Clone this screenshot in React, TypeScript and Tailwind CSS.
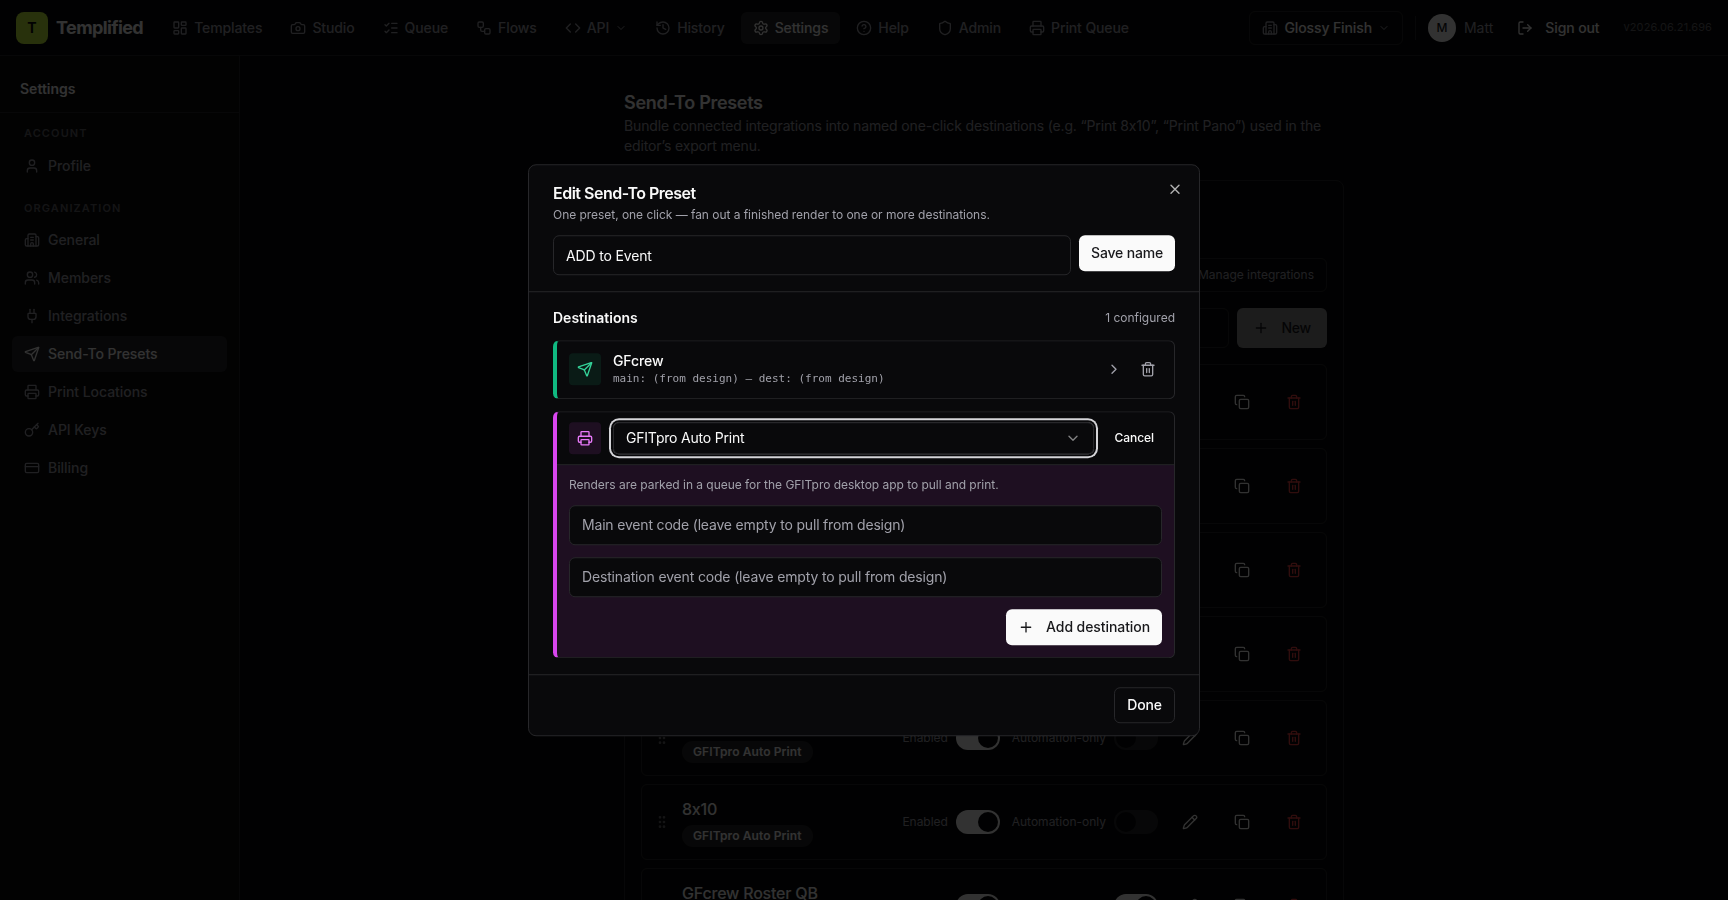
import React from 'react';
import {
    Building2,
    Camera,
    ChevronDown,
    ChevronRight,
    CircleQuestionMark,
    Code,
    Copy,
    CreditCard,
    GripVertical,
    History,
    Key,
    LayoutDashboard,
    ListChecks,
    LogOut,
    Pencil,
    Plug,
    Plus,
    Printer,
    Send,
    Settings,
    Shield,
    Trash2,
    User,
    Users,
    Workflow,
    X,
} from 'lucide-react';
import type { LucideIcon } from 'lucide-react';

interface NavItem {
    label: string;
    icon: LucideIcon;
    active?: boolean;
    hasMenu?: boolean;
}

interface Preset {
    name: string;
    destination: string;
    enabled: boolean;
    automationOnly: boolean;
}

const NAV_ITEMS: NavItem[] = [
    { label: 'Templates', icon: LayoutDashboard },
    { label: 'Studio', icon: Camera },
    { label: 'Queue', icon: ListChecks },
    { label: 'Flows', icon: Workflow },
    { label: 'API', icon: Code, hasMenu: true },
    { label: 'History', icon: History },
    { label: 'Settings', icon: Settings, active: true },
    { label: 'Help', icon: CircleQuestionMark },
    { label: 'Admin', icon: Shield },
    { label: 'Print Queue', icon: Printer },
];

const ACCOUNT_ITEMS: NavItem[] = [{ label: 'Profile', icon: User }];

const ORG_ITEMS: NavItem[] = [
    { label: 'General', icon: Building2 },
    { label: 'Members', icon: Users },
    { label: 'Integrations', icon: Plug },
    { label: 'Send-To Presets', icon: Send, active: true },
    { label: 'Print Locations', icon: Printer },
    { label: 'API Keys', icon: Key },
    { label: 'Billing', icon: CreditCard },
];

const PRESETS: Preset[] = [
    { name: 'ADD to Event', destination: 'GFcrew', enabled: true, automationOnly: false },
    { name: 'Print 8x10', destination: 'GFITpro Auto Print', enabled: true, automationOnly: false },
    { name: 'Print Pano', destination: 'GFITpro Auto Print', enabled: true, automationOnly: false },
    { name: '4x6', destination: 'GFITpro Auto Print', enabled: true, automationOnly: false },
    { name: '5x7', destination: 'GFITpro Auto Print', enabled: true, automationOnly: false },
    { name: '8x10', destination: 'GFITpro Auto Print', enabled: true, automationOnly: false },
    { name: 'GFcrew Roster QB', destination: 'GFcrew', enabled: true, automationOnly: true },
];

const TopNav: React.FC = () => (
    <header className="flex h-14 items-center border-b border-[#27272a] bg-[#09090b] px-4">
        <div className="flex items-center gap-2">
            <div className="flex size-8 items-center justify-center rounded-lg bg-[#c8f53c] text-sm font-bold text-[#09090b]">T</div>
            <span className="text-lg font-bold tracking-[-0.6px]">Templified</span>
        </div>
        <nav className="ml-[17px] flex items-center gap-1">
            {NAV_ITEMS.map(({ label, icon: Icon, active, hasMenu }) => (
                <a
                    key={label}
                    className={`flex h-8 items-center gap-1.5 rounded-md px-3 text-sm font-medium tracking-[-0.11px] ${active ? 'bg-[#27272a] text-[#fafafa]' : 'text-[#a1a1aa]'}`}
                >
                    <Icon className="size-4" />
                    {label}
                    {hasMenu && <ChevronDown className="size-3" />}
                </a>
            ))}
        </nav>
        <div className="ml-auto flex items-center">
            <button className="flex h-[34px] items-center gap-1.5 rounded-md border border-[#27272a] px-3 text-sm font-medium tracking-[-0.12px]">
                <Building2 className="size-4 text-[#a1a1aa]" />
                Glossy Finish
                <ChevronDown className="size-3 text-[#a1a1aa]" />
            </button>
            <div className="ml-3 h-6 w-px bg-[#27272a]" />
            <div className="ml-3 flex size-7 items-center justify-center rounded-full bg-[#fafafa] text-xs font-medium text-[#18181b]">M</div>
            <span className="ml-2 text-sm text-[#a1a1aa]">Matt</span>
            <button className="ml-3 flex items-center gap-3 px-3 text-sm font-medium tracking-[-0.1px]">
                <LogOut className="size-4" />
                Sign out
            </button>
            <span className="ml-3 text-[11px] tracking-[0.1px] text-[#66666c]">v2026.06.21.696</span>
        </div>
    </header>
);

const SidebarGroup: React.FC<{ title: string; items: NavItem[] }> = ({ title, items }) => (
    <div>
        <div className="px-3 pb-1.5 text-[11px] leading-[16.5px] font-semibold tracking-[0.1em] text-[#66666c] uppercase">{title}</div>
        <div className="flex flex-col gap-0.5">
            {items.map(({ label, icon: Icon, active }) => (
                <a
                    key={label}
                    className={`flex h-9 items-center gap-2 rounded-md px-3 text-sm font-medium tracking-[-0.05px] ${active ? 'bg-[#27272a] text-[#fafafa]' : 'text-[#a1a1aa]'}`}
                >
                    <Icon className="size-4" />
                    {label}
                </a>
            ))}
        </div>
    </div>
);

const Sidebar: React.FC = () => (
    <aside className="w-60 shrink-0 border-r border-[#27272a] bg-[#0c0c0e]">
        <div className="flex h-[57px] items-end border-b border-[#27272a] px-5 pb-[13px] text-sm font-semibold">Settings</div>
        <div className="flex flex-col gap-4 px-3 pt-3">
            <SidebarGroup title="Account" items={ACCOUNT_ITEMS} />
            <SidebarGroup title="Organization" items={ORG_ITEMS} />
        </div>
    </aside>
);

const Toggle: React.FC<{ on: boolean }> = ({ on }) => (
    <span className={`flex h-6 w-11 items-center rounded-full border-2 border-transparent ${on ? 'justify-end bg-[#fafafa]' : 'bg-[#27272a]'}`}>
        <span className="size-5 rounded-full bg-[#09090b]" />
    </span>
);

const PresetRow: React.FC<{ preset: Preset }> = ({ preset }) => (
    <div className="flex h-[76px] shrink-0 items-center gap-3 rounded-md border border-[#27272a] px-3">
        <GripVertical className="size-4 text-[#66666c]" />
        <div className="flex flex-1 flex-col items-start gap-1">
            <span className="leading-6 font-medium tracking-[-0.2px]">{preset.name}</span>
            <span className="rounded-full border border-transparent bg-[#27272a] px-2.5 py-0.5 text-xs font-semibold tracking-[0.1px]">{preset.destination}</span>
        </div>
        <label className="flex items-center gap-2 text-xs tracking-[-0.05px] text-[#a1a1aa]">
            Enabled
            <Toggle on={preset.enabled} />
        </label>
        <label className="flex items-center gap-2 text-xs text-[#a1a1aa]">
            Automation-only
            <Toggle on={preset.automationOnly} />
        </label>
        <div className="flex gap-3">
            <button className="flex size-10 items-center justify-center"><Pencil className="size-4" /></button>
            <button className="flex size-10 items-center justify-center"><Copy className="size-4" /></button>
            <button className="flex size-10 items-center justify-center text-[#ef4444]"><Trash2 className="size-4" /></button>
        </div>
    </div>
);

const PresetsPage: React.FC = () => (
    <main className="flex-1 overflow-hidden pt-[33px]">
        <div className="mx-auto w-[720px]">
            <h1 className="text-lg leading-[27px] font-semibold tracking-[-0.3px]">Send-To Presets</h1>
            <p className="text-sm tracking-[-0.15px] text-[#a1a1aa]">
                Bundle connected integrations into named one-click destinations (e.g. “Print 8x10”, “Print Pano”) used in the
                <br />
                editor’s export menu.
            </p>
            <section className="mt-6 rounded-lg border border-[#27272a] bg-[#09090b] px-4 pb-4">
                <div className="flex h-[110.5px] items-end justify-end">
                    <button className="flex h-[34px] items-center rounded-md border border-[#27272a] px-3 text-xs text-[#a1a1aa]">Manage integrations</button>
                </div>
                <div className="mt-4 flex gap-2">
                    <div className="h-10 flex-1 rounded-md border border-[#27272a]" />
                    <button className="flex h-10 items-center gap-3 rounded-md bg-[#8c8c8c] px-4 text-sm font-medium tracking-[-0.2px] text-[#18181b]">
                        <Plus className="size-4" />
                        New
                    </button>
                </div>
                <div className="mt-4 flex flex-col gap-2">
                    {PRESETS.map(preset => (
                        <PresetRow key={preset.name} preset={preset} />
                    ))}
                </div>
            </section>
        </div>
    </main>
);

const EditPresetDialog: React.FC = () => (
    <>
        <div className="fixed inset-0 z-40 bg-black/80" />
        <div className="fixed top-1/2 left-1/2 z-50 w-[672px] rounded-lg border border-[#27272a] bg-[#09090b] [transform:translate(-50%,-50%)]">
            <button className="absolute top-4 right-4 opacity-70"><X className="size-4" /></button>

            <div className="border-b border-[#27272a] px-6 py-4">
                <h2 className="text-base leading-6 font-semibold tracking-[-0.5px]">Edit Send-To Preset</h2>
                <p className="mt-0.5 text-xs tracking-[-0.04px] text-[#a1a1aa]">One preset, one click — fan out a finished render to one or more destinations.</p>
                <div className="mt-3 flex items-start gap-2">
                    <input defaultValue="ADD to Event" className="h-10 min-w-0 flex-1 rounded-md border border-[#27272a] bg-[#09090b] px-3 text-sm tracking-[-0.15px]" />
                    <button className="h-9 rounded-md bg-[#fafafa] px-3 text-sm font-medium tracking-[-0.18px] text-[#18181b]">Save name</button>
                </div>
            </div>

            <div className="px-6 py-4">
                <div className="flex items-center justify-between">
                    <h3 className="text-sm font-semibold">Destinations</h3>
                    <span className="text-xs text-[#a1a1aa]">1 configured</span>
                </div>

                <div className="mt-3 flex items-center rounded-md border border-l-4 border-[#27272a] border-l-[#10b981] py-2.5 pr-[18px] pl-3">
                    <div className="flex size-8 items-center justify-center rounded bg-[#10b981]/10 text-[#34d399]"><Send className="size-4" /></div>
                    <div className="ml-3 flex-1">
                        <div className="text-sm font-medium tracking-[-0.1px]">GFcrew</div>
                        <div className="font-['DejaVu_Sans_Mono',monospace] text-[11px] leading-[16.5px] text-[#a1a1aa]">main: (from design) — dest: (from design)</div>
                    </div>
                    <ChevronRight className="size-4 text-[#a1a1aa]" />
                    <Trash2 className="ml-[18px] size-4 text-[#a1a1aa]" />
                </div>

                <div className="mt-3 overflow-hidden rounded-md border border-l-4 border-[#27272a] border-l-[#d946ef]">
                    <div className="flex items-center border-b border-[#27272a] py-2.5 pr-2 pl-3">
                        <div className="flex size-8 items-center justify-center rounded bg-[#d946ef]/10 text-[#e879f9]"><Printer className="size-4" /></div>
                        <button className="ml-3 flex h-8 flex-1 items-center justify-between rounded-md border border-[#27272a] px-3 text-sm tracking-[-0.2px] ring-2 ring-[#d4d4d8] ring-offset-2 ring-offset-[#09090b]">
                            GFITpro Auto Print
                            <ChevronDown className="size-4 opacity-50" />
                        </button>
                        <button className="ml-2 h-8 px-3 text-xs font-medium tracking-[-0.05px]">Cancel</button>
                    </div>
                    <div className="flex flex-col gap-3 bg-[#d946ef]/10 p-3">
                        <p className="text-xs tracking-[-0.03px] text-[#a1a1aa]">Renders are parked in a queue for the GFITpro desktop app to pull and print.</p>
                        <input placeholder="Main event code (leave empty to pull from design)" className="h-10 rounded-md border border-[#27272a] bg-[#09090b] px-3 text-sm tracking-[-0.18px] placeholder:text-[#a1a1aa]" />
                        <input placeholder="Destination event code (leave empty to pull from design)" className="h-10 rounded-md border border-[#27272a] bg-[#09090b] px-3 text-sm tracking-[-0.16px] placeholder:text-[#a1a1aa]" />
                        <button className="flex h-9 items-center gap-3 self-end rounded-md bg-[#fafafa] px-3 text-sm font-medium tracking-[-0.08px] text-[#18181b]">
                            <Plus className="size-4" />
                            Add destination
                        </button>
                    </div>
                </div>
            </div>

            <div className="flex justify-end border-t border-[#27272a] px-6 py-3">
                <button className="h-9 rounded-md border border-[#27272a] px-3 text-sm font-medium tracking-[-0.1px]">Done</button>
            </div>
        </div>
    </>
);

const App: React.FC = () => {
    return (
        <div className="flex h-screen flex-col overflow-hidden bg-[#09090b] font-['Inter',sans-serif] text-[#fafafa] [font-variant-ligatures:no-contextual]">
            <TopNav />
            <div className="flex min-h-0 flex-1">
                <Sidebar />
                <PresetsPage />
            </div>
            <EditPresetDialog />
        </div>
    );
};

export default App;
